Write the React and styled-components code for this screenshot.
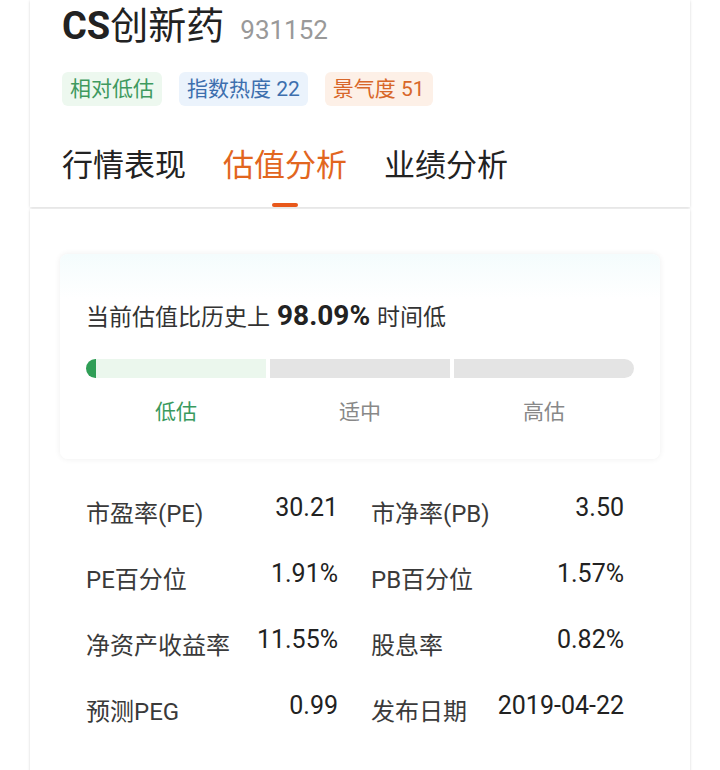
import React from "react";
import styled, { createGlobalStyle } from "styled-components";

const GlobalStyle = createGlobalStyle`
  body {
    margin: 0;
    background: #fff;
    font-family: Roboto, "Noto Sans CJK SC", sans-serif;
    color: #222;
  }
`;

const Page = styled.div`
  padding: 0 30px;
  display: flex;
  flex-direction: column;
  gap: 2px;
`;

const Card = styled.section`
  background: #fff;
  box-shadow: 0 1px 3px rgba(0, 0, 0, 0.12), 0 0 2px rgba(0, 0, 0, 0.05);
`;

const Header = styled(Card)`
  padding: 3px 32px 0;
`;

const Title = styled.div`
  display: flex;
  align-items: baseline;
  gap: 16px;
  line-height: 46px;
`;

const Name = styled.h1`
  margin: 0;
  font-size: 38px;
  font-weight: 400;
  color: #222;
  b {
    font-weight: 700;
  }
`;

const Code = styled.span`
  font-size: 26px;
  color: #999;
`;

const Tags = styled.div`
  display: flex;
  gap: 17px;
  margin-top: 19px;
`;

const tagColors = {
  green: ["#3f9a5f", "#edf8ef"],
  blue: ["#3d6fae", "#ebf3fc"],
  orange: ["#d8672a", "#fdf0e7"],
};

const Tag = styled.span`
  height: 34px;
  line-height: 34px;
  padding: 0 8px;
  border-radius: 6px;
  font-size: 21px;
  color: ${(p) => tagColors[p.tone][0]};
  background: ${(p) => tagColors[p.tone][1]};
`;

const Tabs = styled.nav`
  display: flex;
  gap: 37px;
  margin-top: 40px;
`;

const Tab = styled.div`
  display: flex;
  flex-direction: column;
  align-items: center;
  font-size: 31px;
  line-height: 40px;
  color: ${(p) => (p.active ? "#e2661e" : "#222")};
  &::after {
    content: "";
    width: 26px;
    height: 4px;
    margin-top: 17px;
    border-radius: 2px;
    background: ${(p) => (p.active ? "#e8581b" : "transparent")};
  }
`;

const Body = styled(Card)`
  padding: 45px 30px 40px;
  min-height: 600px;
`;

const Summary = styled.div`
  padding: 46px 26px 32px;
  border-radius: 8px;
  background: linear-gradient(#f4fcfd, #fff 45px);
  box-shadow: 0 0 6px rgba(0, 0, 0, 0.07);
`;

const Sentence = styled.p`
  margin: 0;
  font-size: 23px;
  line-height: 32px;
  color: #333;
  strong {
    font-size: 28px;
    font-weight: 700;
    color: #222;
    margin: 0 7px;
  }
`;

const Bar = styled.div`
  display: flex;
  gap: 4px;
  height: 19px;
  margin-top: 25px;
`;

const Segment = styled.div`
  flex: 1;
  position: relative;
  overflow: hidden;
  background: ${(p) => (p.filled ? "#ebf7ed" : "#e4e4e4")};
  &:first-child {
    border-radius: 10px 0 0 10px;
  }
  &:last-child {
    border-radius: 0 10px 10px 0;
  }
`;

const Cap = styled.span`
  position: absolute;
  left: 0;
  top: 0;
  width: 10px;
  height: 100%;
  background: #2f9e56;
`;

const Levels = styled.div`
  display: flex;
  gap: 4px;
  margin-top: 19px;
`;

const Level = styled.span`
  flex: 1;
  text-align: center;
  font-size: 21px;
  line-height: 30px;
  color: ${(p) => (p.active ? "#3a9a5e" : "#888")};
`;

const Metrics = styled.div`
  display: grid;
  grid-template-columns: 252px 253px;
  column-gap: 33px;
  row-gap: 24px;
  margin: 31px 26px 0;
`;

const Metric = styled.div`
  display: flex;
  justify-content: space-between;
  align-items: flex-start;
`;

const Label = styled.span`
  padding-top: 6px;
  font-size: 24px;
  line-height: 36px;
  color: #3a3a3a;
`;

const Value = styled.span`
  font-size: 25px;
  line-height: 36px;
  color: #222;
`;

const metrics = [
  ["市盈率(PE)", "30.21"],
  ["市净率(PB)", "3.50"],
  ["PE百分位", "1.91%"],
  ["PB百分位", "1.57%"],
  ["净资产收益率", "11.55%"],
  ["股息率", "0.82%"],
  ["预测PEG", "0.99"],
  ["发布日期", "2019-04-22"],
];

export default function App() {
  return (
    <>
      <GlobalStyle />
      <Page>
        <Header>
          <Title>
            <Name>
              <b>CS</b>创新药
            </Name>
            <Code>931152</Code>
          </Title>
          <Tags>
            <Tag tone="green">相对低估</Tag>
            <Tag tone="blue">指数热度 22</Tag>
            <Tag tone="orange">景气度 51</Tag>
          </Tags>
          <Tabs>
            <Tab>行情表现</Tab>
            <Tab active>估值分析</Tab>
            <Tab>业绩分析</Tab>
          </Tabs>
        </Header>
        <Body>
          <Summary>
            <Sentence>
              当前估值比历史上<strong>98.09%</strong>时间低
            </Sentence>
            <Bar>
              <Segment filled>
                <Cap />
              </Segment>
              <Segment />
              <Segment />
            </Bar>
            <Levels>
              <Level active>低估</Level>
              <Level>适中</Level>
              <Level>高估</Level>
            </Levels>
          </Summary>
          <Metrics>
            {metrics.map(([label, value]) => (
              <Metric key={label}>
                <Label>{label}</Label>
                <Value>{value}</Value>
              </Metric>
            ))}
          </Metrics>
        </Body>
      </Page>
    </>
  );
}
